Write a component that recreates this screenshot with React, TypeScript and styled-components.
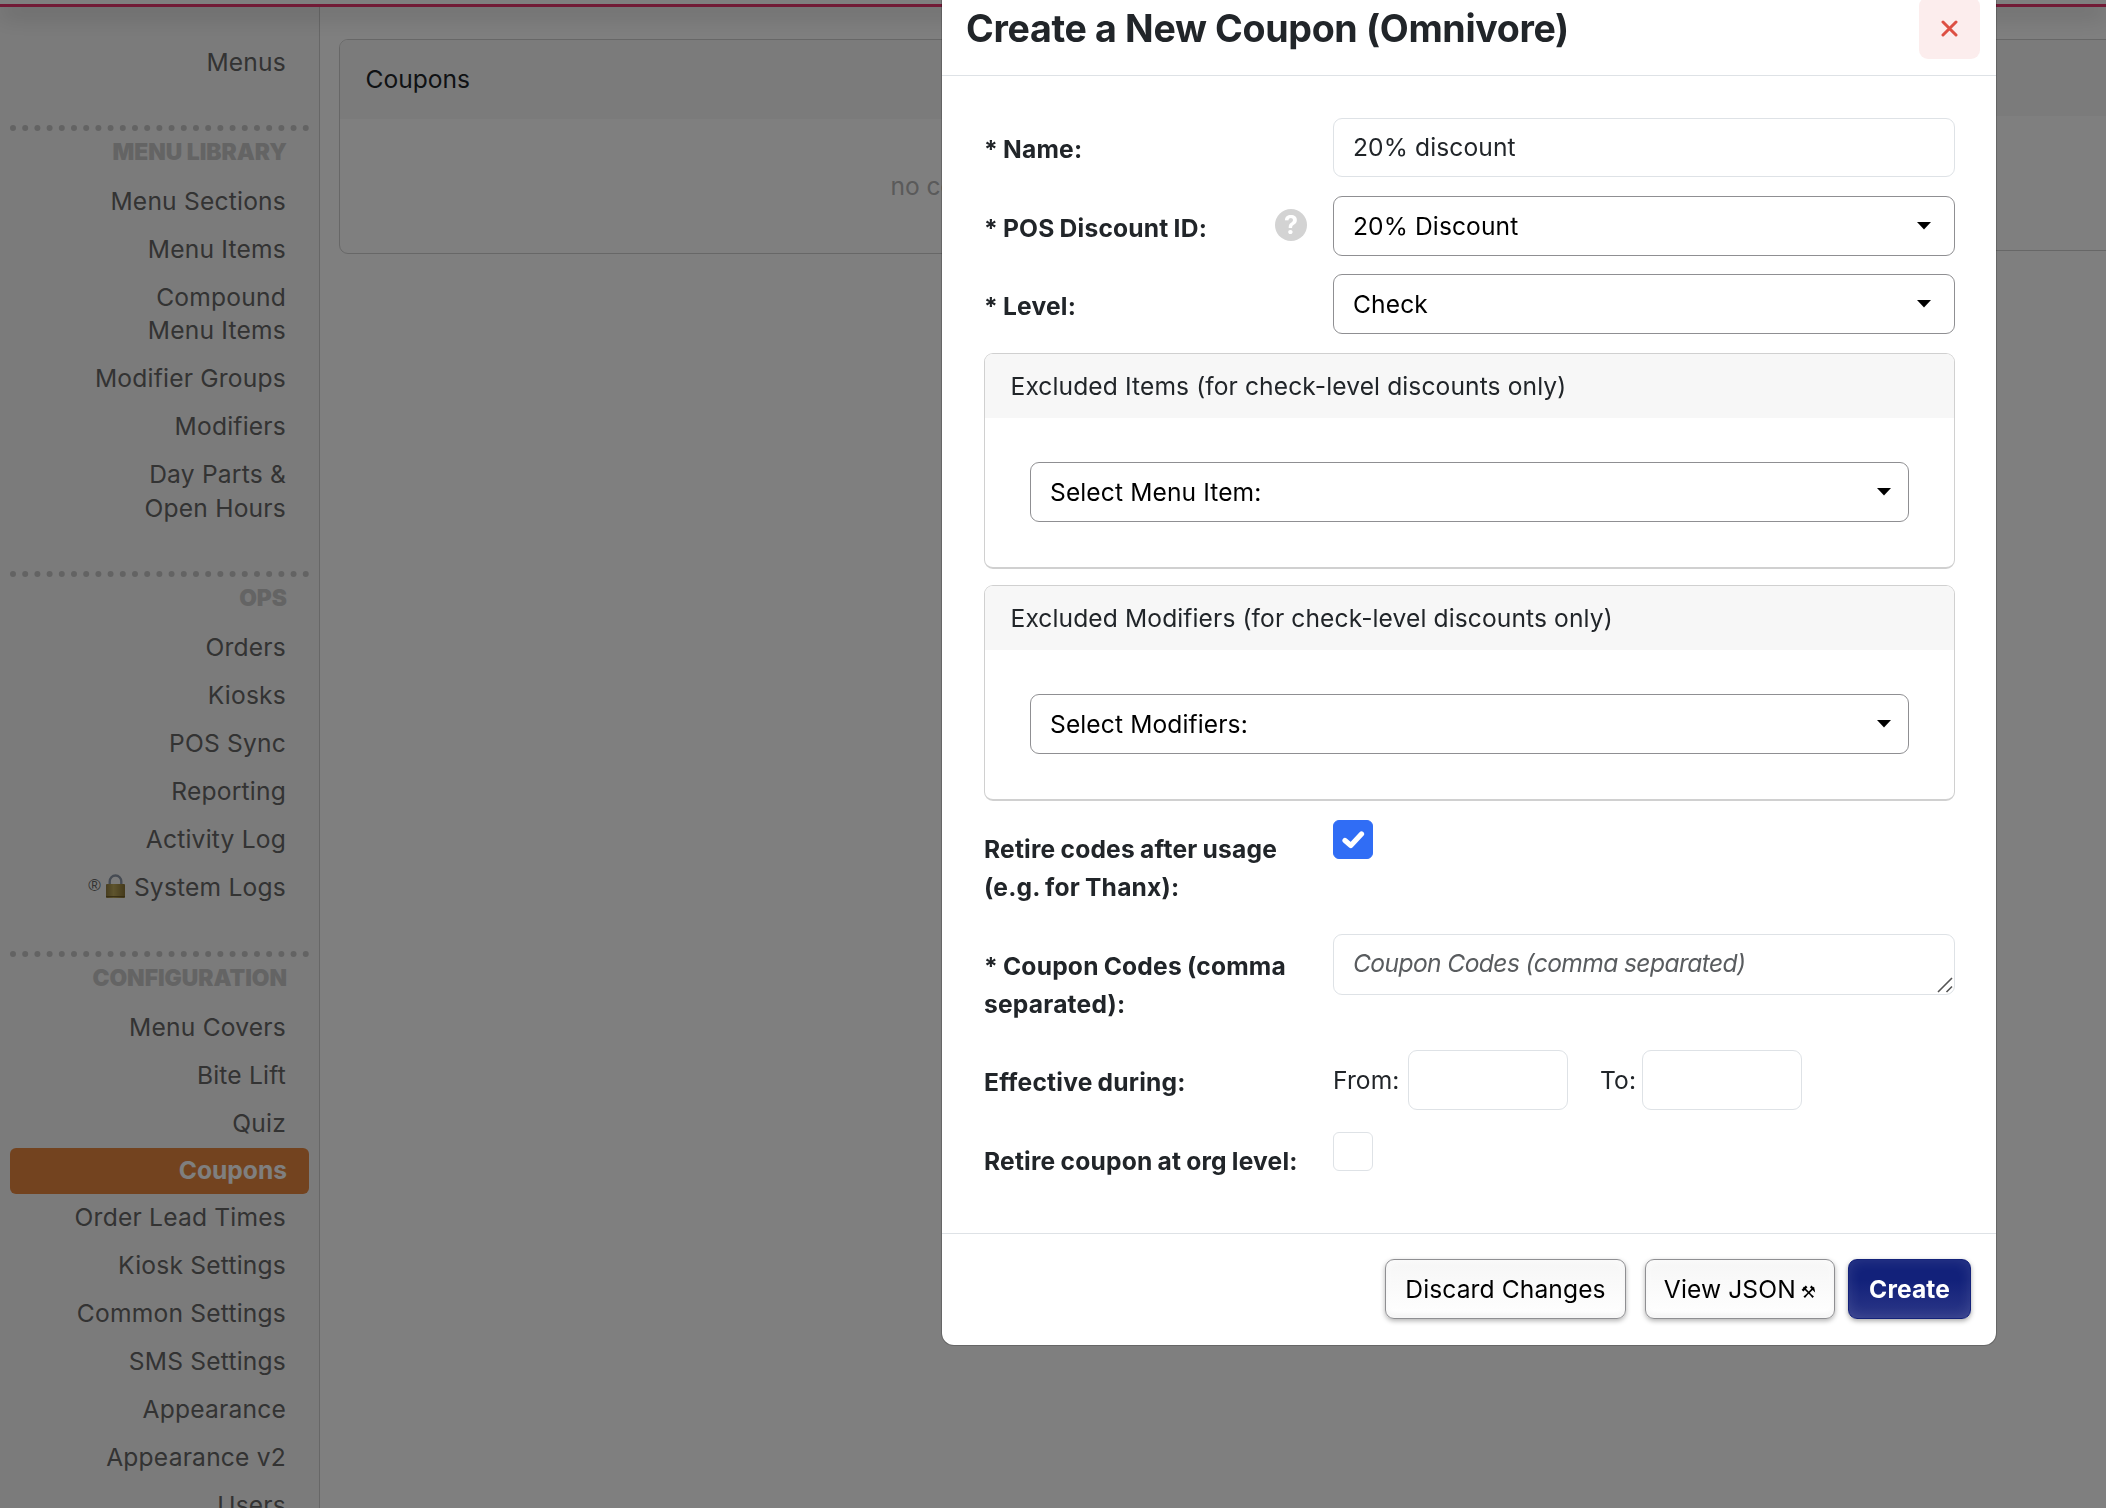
import styled, { createGlobalStyle, css } from 'styled-components';

const theme = {
  font: 'Inter, "Open Sans", "Liberation Sans", sans-serif',
  text: '#212529',
  border: '#dee2e6',
  control: '#8f8f92',
  accent: '#e6873f',
  primary: '#14227a',
};

const GlobalStyle = createGlobalStyle`
  *, *::before, *::after {
    box-sizing: border-box;
  }
  body {
    margin: 0;
    overflow: hidden;
    background: #fff;
    color: ${theme.text};
    font-family: ${theme.font};
    font-size: 24.6px;
    letter-spacing: 0.1px;
    line-height: 38px;
  }
  input, textarea, button {
    font: inherit;
    color: inherit;
    letter-spacing: inherit;
  }
`;

const Page = styled.div`
  display: flex;
  flex-direction: column;
  height: 1508px;
  overflow: hidden;
`;

const TopBar = styled.header`
  position: relative;
  z-index: 1;
  flex: none;
  height: 7px;
  background: #fff;
  border-bottom: 3px solid #e4356c;
  box-shadow: 0 6px 24px rgba(0, 0, 0, 0.32);
`;

const Columns = styled.div`
  display: flex;
  flex: 1;
  min-height: 0;
`;

const Sidebar = styled.nav`
  flex: none;
  width: 320px;
  padding: 32px 10px 0;
  overflow: hidden;
  background: #f7f7f7;
  border-right: 1px solid #cfcfcf;
  letter-spacing: 0.2px;
`;

const NavSection = styled.section`
  margin-top: 37.6px;
  border-top: 6px dotted #c6c6c6;

  &:last-child {
    margin-top: 39.6px;
  }
`;

const NavHeading = styled.h2`
  margin: 0 0 6.5px;
  padding: 1px 22px 0 0;
  color: #c8c8c8;
  font-size: 22.8px;
  font-weight: 900;
  letter-spacing: 0;
  line-height: 39.5px;
  text-align: right;
  text-transform: uppercase;
`;

const NavItem = styled.a<{ $active?: boolean }>`
  display: block;
  padding: 7.1px 23px 7.1px 0;
  color: #666;
  line-height: 33.8px;
  text-align: right;
  white-space: pre-line;

  ${({ $active }) => $active && css`
    padding: 6.1px 22px 6.1px 0;
    background: ${theme.accent};
    border-radius: 6px;
    color: #fff;
    font-weight: 700;
    letter-spacing: 0;
  `}
`;

const Registered = styled.span`
  position: relative;
  top: -5px;
  margin-right: 5px;
  font-family: "Liberation Sans", sans-serif;
  font-size: 17px;
  line-height: 1;
`;

const LockIcon = styled.svg`
  margin-right: 9px;
  vertical-align: -2px;
`;

const Content = styled.main`
  display: flex;
  flex: none;
  align-items: flex-start;
  gap: 30px;
  padding: 32px 0 0 19px;
`;

const Card = styled.section<{ $height: number; $width: number }>`
  width: ${({ $width }) => $width}px;
  height: ${({ $height }) => $height}px;
  border: 1px solid #cfcfcf;
  border-radius: 9px;
  overflow: hidden;
`;

const CardTitle = styled.div<{ $height: number }>`
  height: ${({ $height }) => $height}px;
  padding: 20px 25.5px;
  background: #f7f7f7;
  letter-spacing: 0;
`;

const CardEmpty = styled.div`
  padding: 48px 0 0 5px;
  color: #b4b4b4;
  letter-spacing: -0.1px;
  text-align: center;
`;

const Backdrop = styled.div`
  position: fixed;
  inset: 0;
  z-index: 2;
  padding-left: 941px;
  background: rgba(0, 0, 0, 0.5);
`;

const Modal = styled.div`
  width: 1056px;
  height: 1366px;
  margin-top: -20px;
  background: #fff;
  background-clip: padding-box;
  border: 1px solid rgba(0, 0, 0, 0.2);
  border-radius: 13px;
`;

const ModalHeader = styled.div`
  display: flex;
  align-items: center;
  justify-content: space-between;
  height: 95px;
  padding: 0 16px 0 24px;
  border-bottom: 1px solid ${theme.border};
`;

const ModalTitle = styled.h1`
  margin: 2px 0 0;
  font-size: 37.6px;
  font-weight: 700;
  letter-spacing: -0.34px;
  line-height: 56px;
`;

const CloseButton = styled.button`
  display: flex;
  align-items: center;
  justify-content: center;
  width: 61px;
  height: 62px;
  padding: 0;
  background: #fceded;
  border: 0;
  border-radius: 9px;
`;

const ModalBody = styled.div`
  height: 1157px;
  padding: 42px 41px 0 42px;
`;

const Row = styled.div<{ $height: number }>`
  display: flex;
  align-items: flex-start;
  height: ${({ $height }) => $height}px;
`;

const LabelCell = styled.div<{ $top?: number }>`
  display: flex;
  flex: none;
  justify-content: space-between;
  width: 349px;
  padding: ${({ $top = 12.5 }) => $top}px 26px 0 0;
`;

const Label = styled.label`
  font-weight: 700;
  letter-spacing: 0.2px;
  word-spacing: -1px;
`;

const Help = styled.span`
  display: flex;
  align-items: center;
  justify-content: center;
  width: 32px;
  height: 32px;
  background: #d3d3d3;
  border-radius: 50%;
  color: #fff;
  font-size: 25px;
  font-weight: 700;
`;

const TextInput = styled.input<{ $width?: number; $height?: number }>`
  width: ${({ $width = 622 }) => $width}px;
  height: ${({ $height = 60 }) => $height}px;
  padding: 0 19px 2px;
  background: #fff;
  border: 1px solid ${theme.border};
  border-radius: 9px;
`;

const SelectBox = styled.button<{ $inset?: boolean }>`
  display: flex;
  align-items: center;
  justify-content: space-between;
  width: 100%;
  height: 60px;
  padding: 0 ${({ $inset }) => $inset ? 17 : 23}px 0 19px;
  background: #fff;
  border: 1px solid ${theme.control};
  border-radius: 9px;
  color: #000;
`;

const CaretIcon = styled.svg`
  margin-bottom: 1px;
`;

const Panel = styled.section<{ $gap: number }>`
  height: 216px;
  margin-bottom: ${({ $gap }) => $gap}px;
  border: 1px solid #d0d0d0;
  border-bottom-width: 2px;
  border-radius: 9px;
  overflow: hidden;
`;

const PanelTitle = styled.div`
  height: 64px;
  padding: 13px 26px 13px 25.5px;
  background: #f7f7f7;
`;

const PanelBody = styled.div`
  padding: 44px 45px 0;
`;

const Checkbox = styled.span<{ $checked?: boolean }>`
  display: flex;
  align-items: center;
  justify-content: center;
  width: 40px;
  height: 39px;
  background: ${({ $checked }) => $checked ? '#306df5' : '#fff'};
  border: 1px solid ${({ $checked }) => $checked ? '#306df5' : theme.border};
  border-radius: 6px;
`;

const TextAreaWrap = styled.div`
  position: relative;
  width: 622px;
  height: 61px;
`;

const TextArea = styled.textarea`
  display: block;
  width: 100%;
  height: 100%;
  padding: 9px 19px;
  border: 1px solid ${theme.border};
  border-radius: 9px;
  overflow: hidden;
  resize: none;

  &::placeholder {
    color: #595c5f;
    font-style: italic;
    letter-spacing: -0.6px;
    opacity: 1;
  }
`;

const ResizeGrip = styled.svg`
  position: absolute;
  right: 1px;
  bottom: 1px;
`;

const DateField = styled.label`
  display: flex;
  align-items: center;
  justify-content: space-between;
  margin-right: 32px;
`;

const DateText = styled.span<{ $width: number }>`
  width: ${({ $width }) => $width}px;
`;

const ModalFooter = styled.div`
  display: flex;
  align-items: flex-start;
  justify-content: flex-end;
  padding: 25px 25px 0 0;
  border-top: 1px solid ${theme.border};
`;

const Button = styled.button<{ $width: number; $gap?: number; $primary?: boolean }>`
  width: ${({ $width }) => $width}px;
  height: 60px;
  margin-right: ${({ $gap = 0 }) => $gap}px;
  padding: 0;
  background: linear-gradient(#f6f6f6, #fff);
  border: 1px solid ${theme.control};
  border-radius: 9px;
  box-shadow: inset 0 0 10px rgba(255, 255, 255, 0.9), inset 0 -3px 5px rgba(0, 0, 0, 0.07), 0 2px 5px rgba(0, 0, 0, 0.3);
  color: #000;
  white-space: nowrap;

  ${({ $primary }) => $primary && css`
    background: linear-gradient(#12217a 35%, #2c3787);
    border-color: ${theme.primary};
    box-shadow: inset 0 0 14px rgba(255, 255, 255, 0.12), 0 2px 5px rgba(0, 0, 0, 0.35);
    color: #fff;
    font-weight: 700;
  `}
`;

const Tools = styled.span`
  margin-left: -2px;
  font-family: "DejaVu Sans", sans-serif;
  font-size: 17px;
  line-height: 1;
`;

const sections = [
  {
    title: 'Menu Library',
    items: ['Menu Sections', 'Menu Items', 'Compound\nMenu Items', 'Modifier Groups', 'Modifiers', 'Day Parts &\nOpen Hours'],
  },
  {
    title: 'Ops',
    items: ['Orders', 'Kiosks', 'POS Sync', 'Reporting', 'Activity Log', 'System Logs'],
  },
  {
    title: 'Configuration',
    items: [
      'Menu Covers', 'Bite Lift', 'Quiz', 'Coupons', 'Order Lead Times', 'Kiosk Settings',
      'Common Settings', 'SMS Settings', 'Appearance', 'Appearance v2', 'Users',
    ],
  },
];

const Lock = () => (
  <LockIcon width="19" height="24" viewBox="0 0 19 24">
    <defs>
      <linearGradient id="brass" x1="0" x2="1">
        <stop offset="0" stopColor="#8f7c40"/>
        <stop offset="0.4" stopColor="#bda95c"/>
        <stop offset="1" stopColor="#8a7436"/>
      </linearGradient>
    </defs>
    <path d="M3.700 12V7.500a5.800 6 0 0 1 11.600 0V12" fill="none" stroke="#8d97a6" strokeWidth="2.4"/>
    <rect y="10" width="19" height="14" rx="1" fill="url(#brass)"/>
    <path d="M0 22.600h19" stroke="#6d5a26"/>
  </LockIcon>
);

const Select = ({ value, inset }: { value: string; inset?: boolean }) => (
  <SelectBox type="button" $inset={inset}>
    {value}
    <CaretIcon width="14" height="8" viewBox="0 0 14 8">
      <path d="M0 0h14L7 7.500z" fill="#000"/>
    </CaretIcon>
  </SelectBox>
);

const App = () => (
  <>
    <GlobalStyle/>
    <Page>
      <TopBar/>
      <Columns>
        <Sidebar>
          <NavItem>Menus</NavItem>
          {sections.map(({ title, items }) => (
            <NavSection key={title}>
              <NavHeading>{title}</NavHeading>
              {items.map((item) => (
                <NavItem key={item} $active={item === 'Coupons'}>
                  {item === 'System Logs' && <><Registered>®</Registered><Lock/></>}
                  {item}
                </NavItem>
              ))}
            </NavSection>
          ))}
        </Sidebar>
        <Content>
          <Card $width={1234} $height={215}>
            <CardTitle $height={79}>Coupons</CardTitle>
            <CardEmpty>no coupons</CardEmpty>
          </Card>
          <Card $width={700} $height={212}>
            <CardTitle $height={76}/>
          </Card>
        </Content>
      </Columns>
    </Page>
    <Backdrop>
      <Modal>
        <ModalHeader>
          <ModalTitle>Create a New Coupon (Omnivore)</ModalTitle>
          <CloseButton type="button">
            <svg width="17" height="17" viewBox="0 0 17 17">
              <path d="M2 2l13 13M15 2L2 15" stroke="#dd5044" strokeWidth="3" strokeLinecap="round"/>
            </svg>
          </CloseButton>
        </ModalHeader>
        <ModalBody>
          <Row $height={78}>
            <LabelCell $top={11.5}><Label>* Name:</Label></LabelCell>
            <TextInput $height={59} defaultValue="20% discount"/>
          </Row>
          <Row $height={78}>
            <LabelCell><Label>* POS Discount ID:</Label><Help>?</Help></LabelCell>
            <Select value="20% Discount"/>
          </Row>
          <Row $height={79}>
            <LabelCell><Label>* Level:</Label></LabelCell>
            <Select value="Check"/>
          </Row>
          <Panel $gap={16}>
            <PanelTitle>Excluded Items (for check-level discounts only)</PanelTitle>
            <PanelBody><Select value="Select Menu Item:" inset/></PanelBody>
          </Panel>
          <Panel $gap={19}>
            <PanelTitle>Excluded Modifiers (for check-level discounts only)</PanelTitle>
            <PanelBody><Select value="Select Modifiers:" inset/></PanelBody>
          </Panel>
          <Row $height={114}>
            <LabelCell $top={10}><Label>Retire codes after usage (e.g. for Thanx):</Label></LabelCell>
            <Checkbox $checked>
              <svg width="24" height="18" viewBox="0 0 24 18">
                <path d="M4 9.500l5.800 5L20.500 3" fill="none" stroke="#fff" strokeWidth="5.2" strokeLinecap="round" strokeLinejoin="round"/>
              </svg>
            </Checkbox>
          </Row>
          <Row $height={116}>
            <LabelCell $top={13}><Label>* Coupon Codes (comma separated):</Label></LabelCell>
            <TextAreaWrap>
              <TextArea placeholder="Coupon Codes (comma separated)"/>
              <ResizeGrip width="18" height="18" viewBox="0 0 18 18">
                <path d="M2 16L16 2M10.500 16L16 10.500" stroke="#555" strokeWidth="1.6"/>
              </ResizeGrip>
            </TextAreaWrap>
          </Row>
          <Row $height={82}>
            <LabelCell><Label>Effective during:</Label></LabelCell>
            <DateField><DateText $width={75}>From:</DateText><TextInput $width={160}/></DateField>
            <DateField><DateText $width={42}>To:</DateText><TextInput $width={160}/></DateField>
          </Row>
          <Row $height={101}>
            <LabelCell $top={10}><Label>Retire coupon at org level:</Label></LabelCell>
            <Checkbox/>
          </Row>
        </ModalBody>
        <ModalFooter>
          <Button type="button" $width={241} $gap={19}>Discard Changes</Button>
          <Button type="button" $width={190} $gap={13}>View JSON <Tools>⚒</Tools></Button>
          <Button type="button" $width={123} $primary>Create</Button>
        </ModalFooter>
      </Modal>
    </Backdrop>
  </>
);

export default App;
